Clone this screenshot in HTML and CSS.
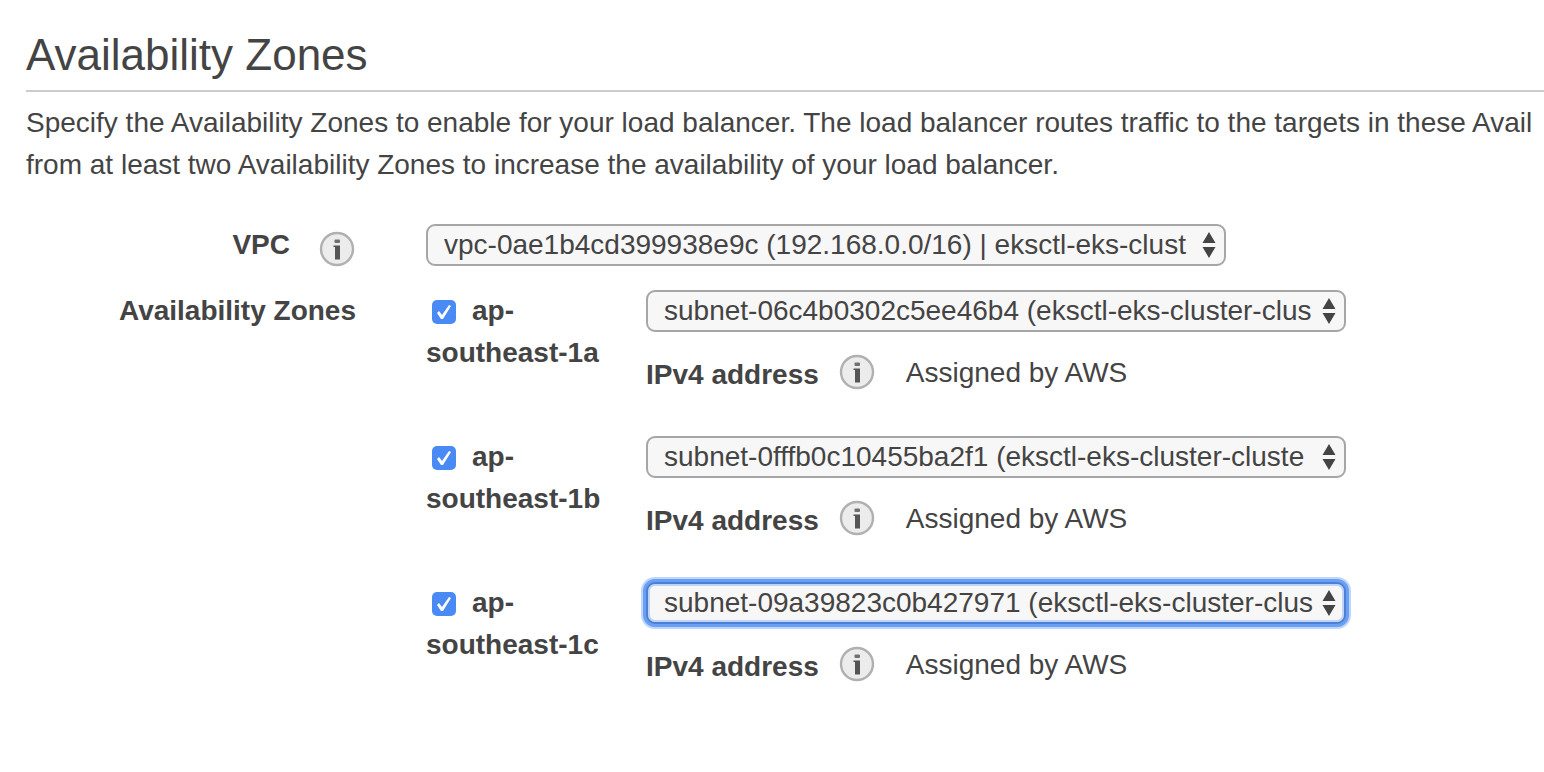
FILE: index.html
```
<!DOCTYPE html>
<html lang="en">
<head>
<meta charset="utf-8">
<title>Availability Zones</title>
<link rel="stylesheet" href="styles.css">
</head>
<body>
<svg class="sprite" aria-hidden="true">
  <symbol id="info" viewBox="0 0 36 36">
    <circle cx="18" cy="18" r="16" fill="#ececec" stroke="#b0b0b0" stroke-width="2.4"/>
    <rect x="15.500" y="8.500" width="5.500" height="3.500" rx="1" fill="#707070"/>
    <path d="M14.500 14.500h6.500v14h-5v-12.500h-1.500z" fill="#555"/>
  </symbol>
  <symbol id="arrows" viewBox="0 0 14 26">
    <path d="M7 0l6.500 11h-13zM7 26l6.500-11h-13z" fill="#444"/>
  </symbol>
</svg>
<main class="section">
  <h1 class="title">Availability Zones</h1>
  <p class="intro">Specify the Availability Zones to enable for your load balancer. The load balancer routes traffic to the targets in these Avail<br>from at least two Availability Zones to increase the availability of your load balancer.</p>
  <form class="form">
    <div class="form-label">
      <label for="vpc">VPC</label>
      <svg class="info"><use href="#info"/></svg>
    </div>
    <div class="select-box select-box-wide">
      <select class="select" id="vpc"><option>vpc-0ae1b4cd399938e9c (192.168.0.0/16) | eksctl-eks-clust</option></select>
      <svg class="arrows"><use href="#arrows"/></svg>
    </div>
    <div class="form-label" id="zones-label">Availability Zones</div>
    <div class="zones" role="group" aria-labelledby="zones-label">
      <div class="zone">
        <label class="zone-name"><input class="check" type="checkbox" checked>ap-southeast-1a</label>
        <div class="zone-detail">
          <div class="select-box">
            <select class="select" aria-label="Subnet for ap-southeast-1a"><option>subnet-06c4b0302c5ee46b4 (eksctl-eks-cluster-clus</option></select>
            <svg class="arrows"><use href="#arrows"/></svg>
          </div>
          <div class="address"><strong class="address-label">IPv4 address</strong><svg class="info"><use href="#info"/></svg><span class="address-value">Assigned by AWS</span></div>
        </div>
      </div>
      <div class="zone">
        <label class="zone-name"><input class="check" type="checkbox" checked>ap-southeast-1b</label>
        <div class="zone-detail">
          <div class="select-box">
            <select class="select" aria-label="Subnet for ap-southeast-1b"><option>subnet-0fffb0c10455ba2f1 (eksctl-eks-cluster-cluste</option></select>
            <svg class="arrows"><use href="#arrows"/></svg>
          </div>
          <div class="address"><strong class="address-label">IPv4 address</strong><svg class="info"><use href="#info"/></svg><span class="address-value">Assigned by AWS</span></div>
        </div>
      </div>
      <div class="zone">
        <label class="zone-name"><input class="check" type="checkbox" checked>ap-southeast-1c</label>
        <div class="zone-detail">
          <div class="select-box">
            <select class="select select-focused" aria-label="Subnet for ap-southeast-1c"><option>subnet-09a39823c0b427971 (eksctl-eks-cluster-clus</option></select>
            <svg class="arrows"><use href="#arrows"/></svg>
          </div>
          <div class="address"><strong class="address-label">IPv4 address</strong><svg class="info"><use href="#info"/></svg><span class="address-value">Assigned by AWS</span></div>
        </div>
      </div>
    </div>
  </form>
</main>
</body>
</html>
```
FILE: styles.css
```
* { box-sizing: border-box; }

body {
  margin: 0;
  background: #fff;
  color: #444;
  font: 28px/42px "Liberation Sans", Arial, sans-serif;
}

.sprite {
  position: absolute;
  width: 0;
  height: 0;
}

.section {
  padding: 27px 0 0 26px;
  overflow: hidden;
}

.title {
  margin: 0;
  padding-bottom: 7px;
  border-bottom: 2px solid #ccc;
  font-size: 44px;
  line-height: 56px;
  font-weight: 400;
}

.intro {
  margin: 10px 0 38px;
  white-space: nowrap;
}

.form {
  display: grid;
  grid-template-columns: 330px minmax(0, 920px);
  column-gap: 70px;
  row-gap: 24px;
}

.form-label {
  display: flex;
  justify-content: flex-end;
  align-items: center;
  align-self: start;
  height: 42px;
  font-weight: 700;
}

.info {
  flex: none;
  width: 36px;
  height: 36px;
}

.form-label .info {
  margin: 8px 1px 0 29px;
}

.select-box {
  position: relative;
  height: 42px;
}

.select-box-wide {
  max-width: 800px;
}

.select {
  display: block;
  appearance: none;
  width: 100%;
  height: 42px;
  margin: 0;
  padding: 0 30px 0 16px;
  border: 2px solid #a6a6a6;
  border-radius: 9px;
  background: #f7f7f7;
  color: #444;
  font: inherit;
  line-height: 38px;
}

.select-focused {
  border-color: #4b80d4;
  outline: 0;
  box-shadow: inset 0 0 0 2px #bed4f8, 0 0 0 3px #6b9ff3, 0 0 0 5px #bfd6fb;
}

.arrows {
  position: absolute;
  top: 8px;
  right: 10px;
  width: 14px;
  height: 26px;
  pointer-events: none;
}

.zones {
  display: grid;
  row-gap: 40px;
}

.zone {
  display: grid;
  grid-template-columns: 200px minmax(0, 1fr);
  column-gap: 20px;
}

.zone-name {
  height: 84px;
  font-weight: 700;
}

.check {
  appearance: none;
  width: 24px;
  height: 24px;
  margin: 0 16px 0 6px;
  border-radius: 5px;
  background: #4a8af4;
  vertical-align: -4px;
}

.check:checked::before {
  content: "";
  display: block;
  width: 24px;
  height: 24px;
  background: #fff;
  clip-path: polygon(5px 13px, 7px 11px, 10px 15px, 17px 5px, 19px 6px, 11px 19px, 9px 19px);
}

.address {
  display: flex;
  align-items: center;
  height: 42px;
  margin-top: 22px;
}

.address-label {
  margin-right: 20px;
}

.address .info {
  margin-bottom: 6px;
}

.address-value {
  margin: 0 0 4px 31px;
}
```
